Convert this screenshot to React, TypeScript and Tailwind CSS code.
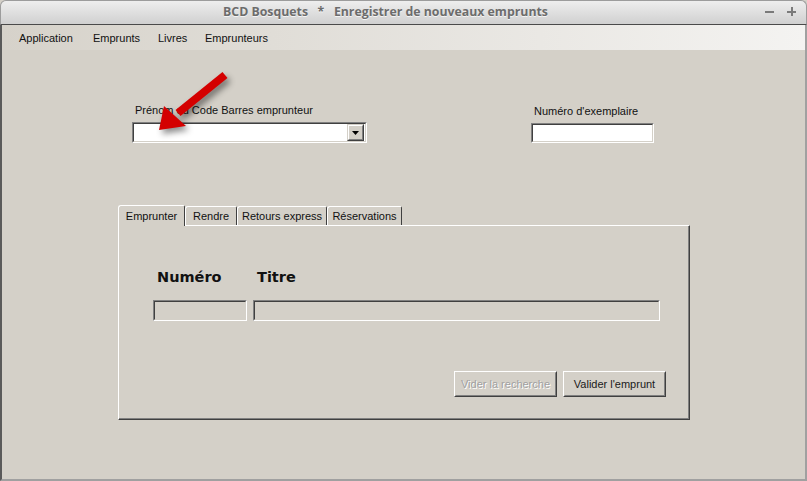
import React from "react";

const sunkenOuter = "border border-t-[#808080] border-l-[#808080] border-b-white border-r-white";
const sunkenInner = "border border-t-[#404040] border-l-[#404040] border-b-[#d4d0c8] border-r-[#d4d0c8]";

function Raised({ children, disabled }: { children: React.ReactNode; disabled?: boolean }) {
  return (
    <div className="border border-t-white border-l-white border-b-[#404040] border-r-[#404040]">
      <div className="border border-t-[#d4d0c8] border-l-[#d4d0c8] border-b-[#808080] border-r-[#808080] h-[24px] w-[101px] flex items-center justify-center">
        <span
          className={disabled ? "text-[#a0a0a0] [text-shadow:1px_1px_0_#ffffff]" : "text-[#1a1a1a]"}
        >
          {children}
        </span>
      </div>
    </div>
  );
}

function Tab({ label, selected, w }: { label: string; selected?: boolean; w: string }) {
  return (
    <div
      className={
        "relative flex items-center justify-center border-t border-l border-t-white border-l-white border-r border-r-[#404040] rounded-tl-[3px] rounded-tr-[2px] " +
        w +
        (selected ? " h-[21px] z-10 bg-[#d4d0c8] -mb-px" : " h-[19px]")
      }
    >
      <span className="text-[11px] text-[#111] whitespace-nowrap">{label}</span>
    </div>
  );
}

export default function App() {
  return (
    <div
      className="relative w-[807px] h-[481px] overflow-hidden bg-[#d4d0c8] text-[11px]"
      style={{ fontFamily: '"Liberation Sans", Arial, sans-serif' }}
    >
      {/* title bar */}
      <div className="h-[25px] rounded-t-[6px] border border-[#9c9c9c] border-b-[#4a4a4a] bg-gradient-to-b from-[#eeeeee] to-[#d0d0d0] flex items-center relative">
        <div
          className="flex-1 text-center pr-[36px] text-[12.3px] font-bold text-[#6c6c6c] whitespace-pre [text-shadow:0_1px_0_#f4f4f4]"
          style={{ fontFamily: '"Open Sans", sans-serif' }}
        >
          {"BCD Bosquets   *   Enregistrer de nouveaux emprunts"}
        </div>
        <div className="absolute right-[10px] top-[5px] flex items-center gap-[13px]">
          <div className="w-[9px] h-[2px] bg-[#7a7a7a] mt-[2px]" />
          <div className="relative w-[9px] h-[9px] mt-[1px]">
            <div className="absolute left-0 top-[4px] w-[9px] h-[2px] bg-[#7a7a7a]" />
            <div className="absolute left-[4px] top-0 w-[2px] h-[9px] bg-[#7a7a7a]" />
          </div>
        </div>
      </div>

      {/* window body */}
      <div className="h-[456px] border-l-2 border-r-2 border-b-2 border-l-[#5a5a5a] border-r-[#a0a0a0] border-b-[#a0a0a0] flex flex-col">
        {/* menu bar */}
        <div className="h-[25px] bg-gradient-to-r from-[#d6d2ca] to-[#f4f3f1] flex items-center pl-[17px] pt-px text-[11px] text-[#111]">
          <span className="w-[74px]">Application</span>
          <span className="w-[65px]">Emprunts</span>
          <span className="w-[47px]">Livres</span>
          <span>Emprunteurs</span>
        </div>

        {/* content */}
        <div className="flex-1 relative">
          <div className="flex pt-[53px] pl-[130px]">
            <div className="flex flex-col w-[235px]">
              <span className="pl-[3px] h-[14px] leading-[14px] text-[#111]">Prénom ou Code Barres emprunteur</span>
              <div className={sunkenOuter + " mt-[5px] h-[21px]"}>
                <div className={sunkenInner + " h-full bg-white flex justify-end items-center pr-px"}>
                  <div className="border border-t-[#d4d0c8] border-l-[#d4d0c8] border-b-[#404040] border-r-[#404040]">
                    <div className="w-[15px] h-[15px] bg-[#d4d0c8] border border-t-white border-l-white border-b-[#808080] border-r-[#808080] flex items-center justify-center">
                      <svg width="7" height="4" viewBox="0 0 7 4">
                        <polygon points="0,0 7,0 3.5,4" fill="#000" />
                      </svg>
                    </div>
                  </div>
                </div>
              </div>
            </div>
            <div className="flex flex-col w-[123px] ml-[164px] pt-px">
              <span className="pl-[3px] h-[14px] leading-[14px] text-[#111]">Numéro d'exemplaire</span>
              <div className={sunkenOuter + " mt-[5px] h-[20px]"}>
                <div className={sunkenInner + " h-full bg-white"} />
              </div>
            </div>
          </div>

          {/* tab widget */}
          <div className="ml-[116px] mt-[61px] w-[572px]">
            <div className="flex items-end h-[21px]">
              <Tab label="Emprunter" selected w="w-[67px]" />
              <Tab label="Rendre" w="w-[52px]" />
              <Tab label="Retours express" w="w-[90px]" />
              <Tab label="Réservations" w="w-[75px]" />
            </div>
            <div className="h-[195px] border-t border-l border-t-white border-l-white border-r border-b border-r-[#404040] border-b-[#404040]">
              <div className="h-full border-r border-b border-r-[#808080] border-b-[#808080] flex flex-col pl-[34px] pr-[28px]">
                <div
                  className="flex mt-[43px] text-[14.5px] font-bold text-[#111] h-[18px] items-center"
                  style={{ fontFamily: '"DejaVu Sans", sans-serif' }}
                >
                  <span className="w-[104px] pl-[4px]">Numéro</span>
                  <span>Titre</span>
                </div>
                <div className="flex mt-[13px] gap-[6px]">
                  <div className={sunkenOuter + " w-[94px] h-[21px]"}>
                    <div className={sunkenInner + " h-full"} />
                  </div>
                  <div className={sunkenOuter + " flex-1 h-[21px]"}>
                    <div className={sunkenInner + " h-full"} />
                  </div>
                </div>
                <div className="flex justify-end mt-[50px] gap-[6px] mr-[-6px]">
                  <Raised disabled>Vider la recherche</Raised>
                  <Raised>Valider l'emprunt</Raised>
                </div>
              </div>
            </div>
          </div>
        </div>
      </div>

      {/* red arrow annotation */}
      <svg
        className="absolute left-0 top-0 pointer-events-none"
        width="807"
        height="481"
        viewBox="0 0 807 481"
        style={{ filter: "drop-shadow(3px 4px 3px rgba(0,0,0,0.45))" }}
      >
        <line x1="225" y1="75" x2="178" y2="113" stroke="#d40000" strokeWidth="8" strokeLinecap="butt" />
        <polygon points="159,130 164,106 186,126" fill="#d40000" />
      </svg>
    </div>
  );
}
